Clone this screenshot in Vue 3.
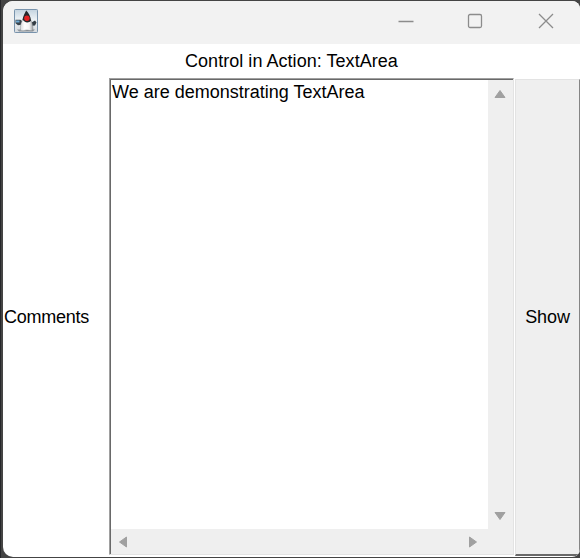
<script setup>
import { ref } from 'vue'

const heading = ref('Control in Action: TextArea')
const content = ref('We are demonstrating TextArea')
</script>

<template>
  <div class="desktop">
    <div class="window">
      <header class="titlebar">
        <svg class="app-icon" viewBox="0 0 24 24">
          <defs>
            <linearGradient id="sky" x1="0" y1="0" x2="0" y2="1">
              <stop offset="0" stop-color="#c3d3df" />
              <stop offset="0.45" stop-color="#eef3f6" />
              <stop offset="1" stop-color="#d6dade" />
            </linearGradient>
            <linearGradient id="belly" x1="0" y1="0" x2="1" y2="0">
              <stop offset="0" stop-color="#d8dadb" />
              <stop offset="0.35" stop-color="#ffffff" />
              <stop offset="0.7" stop-color="#f4f4f4" />
              <stop offset="1" stop-color="#9da0a2" />
            </linearGradient>
          </defs>
          <rect x="0.5" y="0.5" width="23" height="23" rx="0.8" fill="url(#sky)" stroke="#7893ac" />
          <path d="M3 20.500h18l-2 2H5z" fill="#8f969c" />
          <path d="M1.500 10.800h5l2.500 2-1 3-4 .4-2.500-2z" fill="#39434b" />
          <path d="M2 11.500h3.500v2H2z" fill="#6ea9d4" />
          <path d="M17.500 13.500l3.500-2 1.500 2-1.500 3-3.500.3z" fill="#343d44" />
          <path d="M9.500 9.500c-2.200 3-3.700 8-3 11.700 2 1.500 4-.3 6.300-.2 2.300.1 4.500 1.500 6.200 0 .2-4-1-8.500-3-11.500z" fill="url(#belly)" stroke="#777c80" stroke-width="0.4" />
          <path d="M12.200 1.500c-1 2-3.200 5.300-3.700 9.200l2 1.800c2 1.500 4.800 1.200 6.500-.7-.2-4-2.300-8.200-4.800-10.300z" fill="#25282b" />
          <circle cx="12.900" cy="9.300" r="2.700" fill="#e32222" />
        </svg>
        <div class="controls">
          <svg class="glyph" viewBox="0 0 16 16"><path d="M0.500 8.500h15" /></svg>
          <svg class="glyph" viewBox="0 0 16 16"><rect x="1.500" y="1.500" width="13" height="13" rx="1.500" /></svg>
          <svg class="glyph" viewBox="0 0 16 16"><path d="M1 1l14 14M15 1L1 15" /></svg>
        </div>
      </header>
      <div class="heading"><span>{{ heading }}</span></div>
      <main class="body">
        <div class="label">Comments</div>
        <div class="textarea">
          <div class="text">{{ content }}</div>
          <div class="vbar">
            <svg class="arrow" viewBox="0 0 12 10"><path d="M6 1.500L11 8.500H1z" /></svg>
            <svg class="arrow" viewBox="0 0 12 10"><path d="M6 8.500L11 1.500H1z" /></svg>
          </div>
          <div class="hbar">
            <svg class="arrow side" viewBox="0 0 10 12"><path d="M1.500 6L8.500 1v10z" /></svg>
            <svg class="arrow side" viewBox="0 0 10 12"><path d="M8.500 6L1.500 1v10z" /></svg>
          </div>
          <div class="corner"></div>
        </div>
        <div class="button">Show</div>
      </main>
    </div>
  </div>
</template>

<style>
body {
  margin: 0;
  overflow: hidden;
}
</style>

<style scoped>
.desktop {
  box-sizing: border-box;
  width: 580px;
  height: 558px;
  padding: 1px 0 1px 3px;
  background: linear-gradient(90deg, #26272a 0 1px, #444 1px);
  font: 18px/20px "Liberation Sans", Arial, sans-serif;
  color: #000;
}
.window {
  display: flex;
  flex-direction: column;
  height: 556px;
  background: #fff;
  border-radius: 10px 8px 8px 10px;
  overflow: hidden;
}
.titlebar {
  display: flex;
  justify-content: space-between;
  box-sizing: border-box;
  height: 43px;
  padding: 8px 26px 0 11px;
  background: #f2f2f2;
}
.app-icon {
  width: 24px;
  height: 24px;
}
.controls {
  display: flex;
  padding-top: 4px;
}
.glyph {
  width: 16px;
  height: 16px;
  margin-left: 55px;
  fill: none;
  stroke: #8c8c8c;
  stroke-width: 1.300;
}
.glyph:nth-child(2) {
  margin-left: 53px;
}
.heading {
  box-sizing: border-box;
  height: 34px;
  padding: 7px 0 0 182px;
  letter-spacing: 0.04px;
  white-space: nowrap;
}
.body {
  display: grid;
  grid-template-columns: 106px 405px 66px;
  height: 479px;
}
.label {
  display: flex;
  align-items: center;
  padding: 0 0 2px 1px;
  letter-spacing: -0.25px;
}
.textarea {
  display: grid;
  grid-template-columns: 377px 25px;
  grid-template-rows: 449px 25px;
  box-sizing: border-box;
  height: 477px;
  border: 1px solid #e3e3e3;
  border-top-color: #a0a0a0;
  border-left-color: #a0a0a0;
  box-shadow: inset 1px 1px #696969;
  padding: 1px 0 0 1px;
}
.text {
  padding: 2px 0 0 1px;
  white-space: nowrap;
}
.vbar,
.hbar {
  display: flex;
  align-items: center;
  justify-content: space-between;
  background: #efefef;
}
.vbar {
  flex-direction: column;
  padding: 9px 1px 8px 0;
}
.hbar {
  padding: 0 10px 0 7px;
}
.corner {
  background: #efefef;
}
.arrow {
  width: 12px;
  height: 10px;
  fill: #a0a0a0;
  stroke: #a0a0a0;
  stroke-width: 1;
  stroke-linejoin: round;
}
.side {
  width: 10px;
  height: 12px;
}
.button {
  display: flex;
  align-items: center;
  justify-content: center;
  box-sizing: border-box;
  margin: 1px 0 1px 1px;
  border: 1px solid #e3e3e3;
  border-right-color: #858585;
  border-bottom: 2px solid #696969;
  background: #efefef;
  letter-spacing: -0.1px;
}
</style>
